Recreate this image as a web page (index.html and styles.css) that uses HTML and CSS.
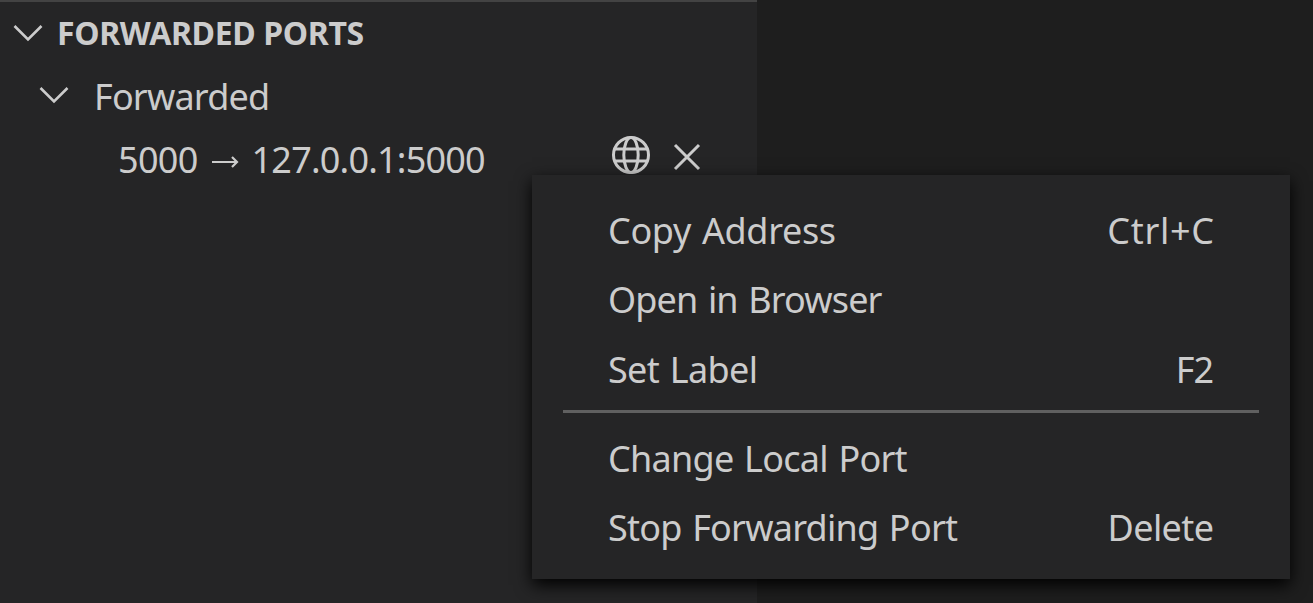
FILE: index.html
```html
<!DOCTYPE html>
<html lang="en">
<head>
<meta charset="utf-8">
<title>Forwarded Ports</title>
<link rel="stylesheet" href="styles.css">
</head>
<body>
<main class="sidebar">
  <header class="row title">
    <svg class="chevron" viewBox="0 0 30 18"><path d="M1.5 2 15 15.5 28.500 2"/></svg>
    <h1>FORWARDED PORTS</h1>
  </header>
  <div class="row group">
    <svg class="chevron" viewBox="0 0 30 18"><path d="M1.5 2 15 15.5 28.500 2"/></svg>
    <span class="group-label">Forwarded</span>
  </div>
  <div class="row port">
    <span class="local">5000</span>
    <svg class="arrow" viewBox="0 0 28 16"><path d="M1 8H26M21 3 26 8 21 13"/></svg>
    <span class="address">127.0.0.1:5000</span>
    <span class="actions">
      <svg class="globe" viewBox="0 0 40 40"><circle cx="20" cy="20" r="17.500"/><ellipse cx="20" cy="20" rx="7.200" ry="17.500"/><path d="M4 14H36M4 26H36"/></svg>
      <svg class="close" viewBox="0 0 28 28"><path d="M2 2 26 26M26 2 2 26"/></svg>
    </span>
  </div>
</main>
<nav class="menu">
  <div class="item"><span class="copy">Copy Address</span><kbd class="ctrl">Ctrl+C</kbd></div>
  <div class="item"><span class="open">Open in Browser</span></div>
  <div class="item"><span class="set">Set Label</span><kbd class="f2">F2</kbd></div>
  <hr>
  <div class="item"><span class="change">Change Local Port</span></div>
  <div class="item"><span class="stop">Stop Forwarding Port</span><kbd class="delete">Delete</kbd></div>
</nav>
</body>
</html>
```

FILE: styles.css
```css
* { box-sizing: border-box; }
body {
  margin: 0;
  height: 603px;
  overflow: hidden;
  background: #1e1e1e;
  color: #cccccc;
  font: 36px/48px "Noto Sans", "Open Sans", sans-serif;
  white-space: nowrap;
}
svg { flex: none; fill: none; stroke: #cccccc; stroke-width: 2.6; }
.sidebar {
  width: 757px;
  height: 603px;
  background: #252526;
  border-top: 2px solid #434343;
}
.row { display: flex; align-items: center; height: 63px; }
.title { padding-left: 13px; gap: 14px; }
.chevron { width: 30px; height: 18px; }
h1 { margin: 0 0 1px; font-size: 32px; font-weight: 700; letter-spacing: -0.35px; }
.title .chevron { margin-bottom: 1px; }
.group { padding-left: 39px; gap: 25px; }
.group .chevron { margin-bottom: 3px; }
.group-label { letter-spacing: -0.8px; }
.port { padding-left: 118px; }
.local { letter-spacing: -0.7px; }
.arrow { width: 28px; height: 16px; margin: 5px 13px 0; stroke-width: 2.2; }
.address { letter-spacing: -0.8px; }
.actions { display: flex; align-items: center; gap: 22px; margin-left: auto; padding-right: 56px; }
.globe { width: 40px; height: 40px; margin-bottom: 9px; stroke-width: 3; }
.close { width: 28px; height: 28px; margin-bottom: 6px; stroke-width: 3; }
.menu {
  position: absolute;
  left: 532px;
  top: 175px;
  width: 758px;
  height: 404px;
  padding-top: 22px;
  background: #252526;
  box-shadow: 0 6px 16px #000000;
}
.item {
  display: flex;
  justify-content: space-between;
  height: 69.3px;
  padding: 10px 76px;
  word-spacing: 2px;
}
.copy { letter-spacing: -0.35px; }
.open { letter-spacing: -0.85px; }
.set { letter-spacing: -0.65px; }
.change { letter-spacing: -0.74px; }
.stop { letter-spacing: -0.77px; }
kbd { font: inherit; }
.ctrl { letter-spacing: 0.7px; margin-right: -0.7px; }
.f2 { letter-spacing: -1px; margin-right: 1px; }
.delete { letter-spacing: -0.6px; margin-right: 0.6px; }
hr { height: 3px; margin: 5px 31px 12px; border: 0; background: #606060; }
```
